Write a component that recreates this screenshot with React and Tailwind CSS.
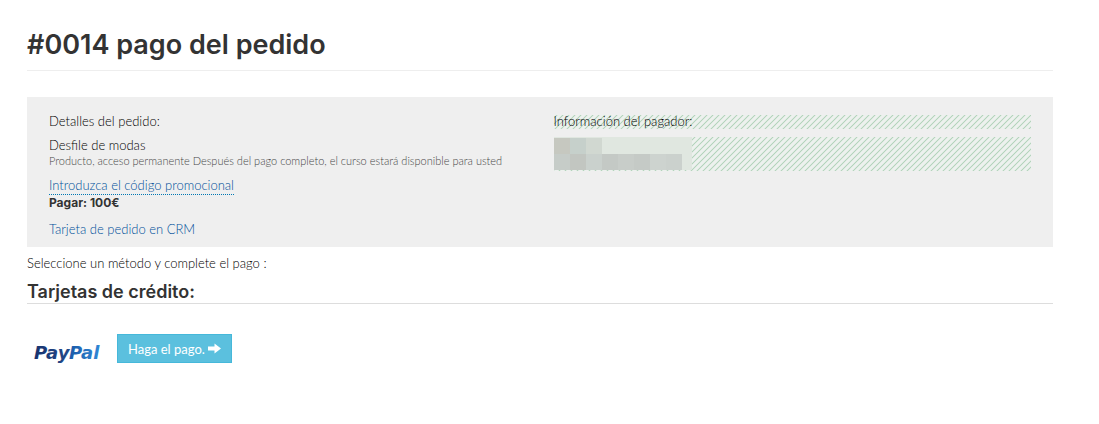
const pixels = [
  ["#c6c8c0", "#c6d0cb", "#d1d8d1", "#e0e7e0", "#e0e7e0", "#e0e7e0", "#e0e7e0", "#e0e7e0"],
  ["#c6ccc8", "#c2c6c1", "#cad1cd", "#c4c9c5", "#c8cdc9", "#c5cac6", "#cdd3cf", "#cbd1cd"],
];

const stripes =
  "bg-[linear-gradient(135deg,#edf1ee_14%,#b4d4bc_25%,#edf1ee_36%,#edf1ee_64%,#b4d4bc_75%,#edf1ee_86%)] bg-size-[6px_6px]";

function PayPalLogo() {
  return (
    <svg width="70" height="28" viewBox="0 0 70 28" role="img" aria-label="PayPal">
      <defs>
        <linearGradient id="pay" x1="0" x2="1">
          <stop offset="0" stopColor="#17336f" />
          <stop offset="1" stopColor="#234b8c" />
        </linearGradient>
        <linearGradient id="pal" x1="0" x2="1">
          <stop offset="0" stopColor="#1c5aa8" />
          <stop offset="1" stopColor="#2f88d6" />
        </linearGradient>
      </defs>
      <g fontFamily="'DejaVu Sans', sans-serif" fontSize="18" fontWeight="700" fontStyle="italic">
        <text x="1" y="21" fill="url(#pay)">Pay</text>
        <text x="36" y="21" fill="url(#pal)">Pal</text>
      </g>
    </svg>
  );
}

function ArrowIcon() {
  return (
    <svg width="13" height="11" viewBox="0 0 13 11" fill="currentColor" aria-hidden="true">
      <path d="M0 3.500h6.500V0.500L13 5.500l-6.500 5V7.500H0z" />
    </svg>
  );
}

function OrderDetails() {
  return (
    <div className="flex-1">
      <p>Detalles del pedido:</p>
      <p className="mt-1">Desfile de modas</p>
      <p className="text-[11px] leading-3 text-[#484848]">
        Producto, acceso permanente Después del pago completo, el curso estará disponible para usted
      </p>
      <div className="mt-2">
        <a href="#promo" className="inline-block border-b border-dotted border-b-[#0077b3] leading-[18px] text-[#00509a]">
          Introduzca el código promocional
        </a>
      </div>
      <p className="font-['Inter',sans-serif] text-xs leading-4 font-bold text-[#333333]">Pagar: 100€</p>
      <a href="#crm" className="mt-2 inline-block text-[#00509a]">
        Tarjeta de pedido en CRM
      </a>
    </div>
  );
}

function PayerInfo() {
  return (
    <div className="flex-1 pt-1">
      <p className={`h-[14px] leading-3 ${stripes}`}>Información del pagador:</p>
      <div className={`mt-2 h-[34px] ${stripes}`}>
        <div className="w-[138px] bg-[#e0e7e0] pt-px">
          {pixels.map((row, i) => (
            <div key={i} className="flex">
              {row.map((color, j) => (
                <span key={j} className="size-4" style={{ backgroundColor: color }} />
              ))}
            </div>
          ))}
        </div>
      </div>
    </div>
  );
}

export default function App() {
  return (
    <main className="bg-white pt-[29px] pr-[46px] pb-12 pl-[27px] font-['Lato',sans-serif] text-[13px] leading-5 font-light text-black">
      <h1 className="border-b border-[#eeeeee] pb-[9px] font-['Inter',sans-serif] text-[27px] leading-8 font-semibold text-[#333333]">
        #0014 pago del pedido
      </h1>

      <section className="mt-[26px] flex gap-[27px] bg-[#efefef] px-[22px] pt-3.5 pb-2">
        <OrderDetails />
        <PayerInfo />
      </section>

      <p className="mt-1.5">Seleccione un método y complete el pago :</p>

      <h2 className="mt-2 border-b border-[#dddddd] font-['Inter',sans-serif] text-lg leading-[22px] font-semibold text-[#333333]">
        Tarjetas de crédito:
      </h2>

      <div className="mt-[30px] flex items-start gap-3.5 pl-1.5">
        <div className="pt-1">
          <PayPalLogo />
        </div>
        <button type="button" className="flex h-[29px] items-center gap-[3px] border border-[#46b8da] bg-[#5bc0de] px-2.5 font-normal text-white">
          Haga el pago.
          <ArrowIcon />
        </button>
      </div>
    </main>
  );
}
